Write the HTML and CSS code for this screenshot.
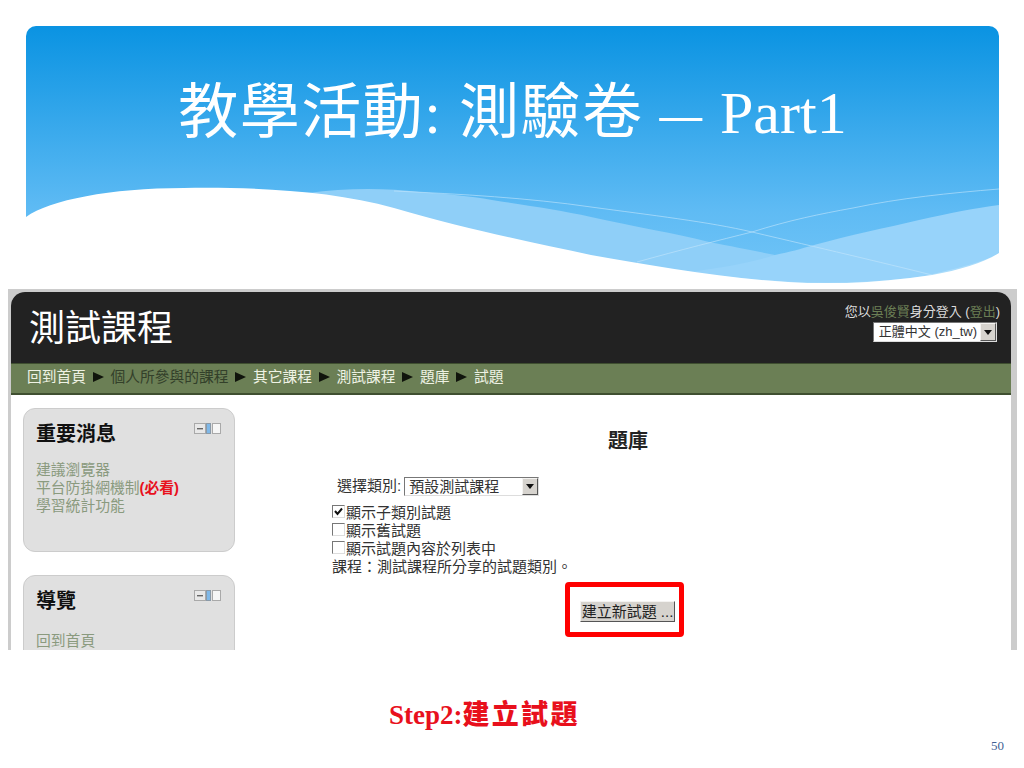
FILE: index.html
```html
<!DOCTYPE html>
<html lang="zh-Hant">
<head>
<meta charset="utf-8">
<title>教學活動: 測驗卷 – Part1</title>
<link rel="stylesheet" href="styles.css">
</head>
<body>
<main class="slide">
  <header class="banner">
    <svg class="banner-art" viewBox="26 26 973 257" preserveAspectRatio="none" aria-hidden="true">
      <defs>
        <linearGradient id="sky" x1="0" y1="0" x2="0" y2="1">
          <stop offset="0" stop-color="#0a93e2"/>
          <stop offset="0.72" stop-color="#5fbbf4"/>
          <stop offset="1" stop-color="#72c5f7"/>
        </linearGradient>
      </defs>
      <rect x="26" y="26" width="973" height="257" fill="url(#sky)"/>
      <path d="M308 193C345 188 385 188 420 192C445 194 470 196 492 200C530 206 560 210 591 217C635 227 675 233 709 242C735 247 755 251 775 255C825 267 880 273 919 276L853 286L600 270Z" fill="#8fcff8"/>
      <path d="M689 272C720 268 750 263 775 255C790 252 800 249 814 245C850 235 885 228 919 220C950 213 975 208 999 205V253C960 280 900 285 853 284C790 285 730 280 689 272Z" fill="#97d3fa"/>
      <path d="M690 272C760 282 840 288 925 276C950 270 985 262 999 253V284H690Z" fill="#aadcfb"/>
      <path d="M394 191C460 194 530 198 591 207C650 215 710 222 752 232C820 248 880 262 932 275M637 262C680 250 720 240 752 232C790 220 820 214 853 208C900 198 950 193 999 189" fill="none" stroke="#c4e6fc" stroke-width="1" opacity="0.6"/>
      <path d="M26 217C50 200 110 188 184 188C250 187 330 190 394 208C470 230 530 242 591 255C650 265 720 278 788 282C830 285 880 283 932 275C960 270 985 262 999 253V284H26Z" fill="#fff"/>
    </svg>
    <h1 class="banner-title">教學活動: 測驗卷 <span class="dash">–</span> <span class="latin">Part1</span></h1>
  </header>

  <section class="shot">
    <div class="site">
      <div class="site-head">
        <div class="site-name">測試課程</div>
        <div class="login">
          <div>您以<a class="link-dim">吳俊賢</a>身分登入 (<a class="link-dim">登出</a>)</div>
          <div class="lang-row">
            <span class="select lang"><span class="select-text">正體中文 (zh_tw)</span><span class="select-btn"><svg viewBox="0 0 8 5" class="caret"><path d="M0 0H8L4 5Z"/></svg></span></span>
          </div>
        </div>
      </div>
      <nav class="crumbs">
        <a>回到首頁</a><span class="sep"></span><a class="crumb-dark">個人所參與的課程</a><span class="sep"></span><a>其它課程</a><span class="sep"></span><a>測試課程</a><span class="sep"></span><a>題庫</a><span class="sep"></span><a>試題</a>
      </nav>
      <div class="columns">
        <aside class="side">
          <div class="block block-news">
            <div class="block-head">
              <h2>重要消息</h2>
              <svg class="dock" viewBox="0 0 27 11" aria-hidden="true">
                <rect x="0.5" y="0.5" width="11" height="10" fill="#e8e8e8" stroke="#a9a9a9"/>
                <rect x="3" y="5" width="6" height="1.4" fill="#666"/>
                <rect x="12.5" y="0.5" width="4" height="10" fill="#7fb8e8" stroke="#8a9aa8"/>
                <rect x="18.5" y="0.5" width="8" height="10" fill="#f6f6f6" stroke="#a9a9a9"/>
              </svg>
            </div>
            <ul class="links">
              <li>建議瀏覽器</li>
              <li>平台防掛網機制<b class="must">(必看)</b></li>
              <li>學習統計功能</li>
            </ul>
          </div>
          <div class="block block-nav">
            <div class="block-head">
              <h2>導覽</h2>
              <svg class="dock" viewBox="0 0 27 11" aria-hidden="true">
                <rect x="0.5" y="0.5" width="11" height="10" fill="#e8e8e8" stroke="#a9a9a9"/>
                <rect x="3" y="5" width="6" height="1.4" fill="#666"/>
                <rect x="12.5" y="0.5" width="4" height="10" fill="#7fb8e8" stroke="#8a9aa8"/>
                <rect x="18.5" y="0.5" width="8" height="10" fill="#f6f6f6" stroke="#a9a9a9"/>
              </svg>
            </div>
            <ul class="links"><li>回到首頁</li></ul>
          </div>
        </aside>
        <div class="main">
          <h3 class="main-title">題庫</h3>
          <div class="cat-row">
            <span>選擇類別:</span>
            <span class="select cat"><span class="select-text">預設測試課程</span><span class="select-btn"><svg viewBox="0 0 8 5" class="caret"><path d="M0 0H8L4 5Z"/></svg></span></span>
          </div>
          <div class="opts">
            <div class="opt"><span class="check"><svg viewBox="0 0 11 11"><path d="M2 5L4.500 8L9 2.500" fill="none" stroke="#111" stroke-width="2"/></svg></span>顯示子類別試題</div>
            <div class="opt"><span class="check"></span>顯示舊試題</div>
            <div class="opt"><span class="check"></span>顯示試題內容於列表中</div>
            <div class="opt">課程：測試課程所分享的試題類別。</div>
          </div>
          <div class="action">
            <span class="new-btn">建立新試題 ...<span class="highlight"></span></span>
          </div>
        </div>
      </div>
    </div>
  </section>

  <p class="caption"><b>Step2:<span class="caption-cjk">建立試題</span></b></p>
  <footer class="page-no">50</footer>
</main>
</body>
</html>
```
FILE: styles.css
```css
* { box-sizing: border-box; }
html, body { margin: 0; padding: 0; background: #fff; }
body { font-family: "Liberation Sans", "Noto Sans CJK TC", sans-serif; overflow: hidden; }
.slide { width: 1024px; height: 768px; padding-top: 26px; overflow: hidden; }

.banner { position: relative; height: 257px; margin: 0 25px 0 26px; border-radius: 10px 10px 0 0; overflow: hidden; }
.banner-art { position: absolute; inset: 0; width: 100%; height: 100%; display: block; }
.banner-title { position: relative; margin: 0; padding-top: 51px; text-align: center; font: 400 60px/72px "Liberation Serif", "Noto Sans CJK TC", serif; color: #fff; letter-spacing: 1.5px; white-space: nowrap; }
.latin { letter-spacing: 0; }
.dash { display: inline-block; transform: scaleX(1.4); margin: 0 6px; }

.shot { width: 1009px; height: 361px; margin: 6px 0 0 8px; padding: 3px 6px 0 3px; background: #ccc; overflow: hidden; }
.site { height: 100%; background: #fff; border-radius: 14px 14px 0 0; overflow: hidden; }
.site-head { height: 71px; background: #222; display: flex; justify-content: space-between; padding: 0 11px 0 18px; color: #ddd; }
.site-name { font: 400 36px/75px "Liberation Serif", "Noto Sans CJK TC", serif; color: #fff; }
.login { padding-top: 11px; font-size: 13px; line-height: 18px; text-align: right; }
.link-dim { color: #6b7f55; }
.lang-row { margin-right: 3px; margin-top: 1px; display: flex; justify-content: flex-end; }
.select { display: inline-flex; align-items: stretch; background: #fff; color: #333; border: 1px solid #777; border-bottom-color: #ddd; border-right-color: #ddd; line-height: 17px; }
.select-text { flex: 1; padding: 0 3px 0 4px; white-space: nowrap; }
.select-btn { width: 16px; background: #d6d3ce; border: 1px solid; border-color: #f4f3f1 #555 #555 #f4f3f1; display: flex; align-items: center; justify-content: center; }
.caret { width: 8px; height: 5px; fill: #111; }
.lang { width: 124px; height: 20px; }

.crumbs { height: 32px; background: #6b7f55; border-top: 1px solid #3f4f30; border-bottom: 2px solid #3f4f30; padding: 4px 0 0 16px; font-size: 14.750px; line-height: 18px; color: #eef2e4; white-space: nowrap; display: flex; align-items: flex-start; }
.sep { flex: none; width: 0; height: 0; margin: 4px 7px 0 6.500px; border-style: solid; border-width: 5px 0 5px 11px; border-color: transparent transparent transparent #10140c; }
.crumb-dark { color: #33402a; }

.columns { display: flex; padding: 13px 0 0 12px; }
.side { width: 212px; flex: none; display: flex; flex-direction: column; gap: 23px; }
.block { background: #e0e0e0; border: 1px solid #ccc; border-radius: 12px; padding: 12px 13px 0 12px; min-height: 100px; }
.block-news { height: 144px; }
.block-nav .links { margin-top: 4px; }
.block-head { display: flex; justify-content: space-between; align-items: flex-start; height: 40px; }
.block-head h2 { margin: 0; font: 700 20px/27px "Liberation Sans", "Noto Sans CJK TC", sans-serif; color: #111; }
.dock { width: 27px; height: 11px; margin-top: 2px; display: block; }
.links { margin: 0; padding: 0; list-style: none; font-size: 14.800px; line-height: 18px; color: #8a9a7e; }
.must { color: #e8101c; }

.main { position: relative; flex: 1; padding: 20px 0 0 97px; font-size: 15px; line-height: 18px; color: #333; }
.main-title { margin: 0 0 0 276px; font: 700 20px/27px "Liberation Sans", "Noto Sans CJK TC", sans-serif; color: #222; }
.cat-row { display: flex; align-items: center; gap: 2px; margin: 21px 0 0 5px; height: 20px; }
.cat { width: 135px; height: 19px; margin-left: 1px; }
.opts { margin-top: 8px; }
.opt { display: flex; align-items: center; height: 18px; white-space: nowrap; }
.check { flex: none; width: 13px; height: 13px; margin: -3px 1px 0 0; border: 1px solid #777; border-right-color: #ddd; border-bottom-color: #ddd; background: #fff; display: block; }
.check svg { display: block; width: 11px; height: 11px; }
.action { margin: 25px 0 0 248px; }
.new-btn { position: relative; display: inline-block; width: 95px; height: 21px; background: #d6d3ce; border: 1px solid; border-color: #f4f3f1 #555 #555 #f4f3f1; color: #222; line-height: 20px; text-align: center; white-space: nowrap; }
.highlight { position: absolute; left: -16px; top: -20px; width: 119px; height: 55px; border: 5px solid #f00; border-radius: 4px; }

.caption { margin: 45px 0 0 389px; font: 700 27px/40px "Liberation Serif", "Noto Sans CJK TC", serif; color: #e8101c; white-space: nowrap; }
.caption-cjk { letter-spacing: 2.300px; }
.page-no { margin: 3px 20px 0 0; text-align: right; font: 400 13px/16px "Liberation Serif", serif; color: #3f5f93; }
```
